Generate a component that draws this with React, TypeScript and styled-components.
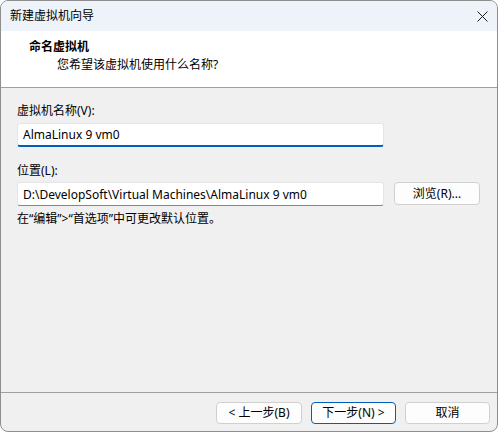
import styled, { createGlobalStyle } from 'styled-components';

const GlobalStyle = createGlobalStyle`
  html, body {
    margin: 0;
    padding: 0;
    background: #ffffff;
  }
  * {
    box-sizing: border-box;
  }
`;

const font = `"Noto Sans", "Noto Sans CJK SC", sans-serif`;

const Window = styled.div`
  width: 498px;
  height: 432px;
  display: flex;
  flex-direction: column;
  border: 1px solid #8e8e8e;
  border-radius: 8px;
  overflow: hidden;
  background: #f0f0f0;
  font-family: ${font};
  font-size: 12px;
  color: #000;
`;

const TitleBar = styled.div`
  height: 30px;
  flex: none;
  display: flex;
  align-items: center;
  justify-content: space-between;
  padding: 0 9px 0 9px;
  background: #eef2f9;
`;

const TitleText = styled.span`
  line-height: 16px;
`;

const CloseButton = styled.button`
  width: 12px;
  height: 12px;
  padding: 0;
  margin-right: 0;
  border: none;
  background: transparent;
  display: flex;
  align-items: center;
  justify-content: center;
`;

const Header = styled.div`
  height: 57px;
  flex: none;
  display: flex;
  flex-direction: column;
  gap: 2px;
  padding: 8px 0 0 28px;
  background: #ffffff;
  border-bottom: 1px solid #a0a0a0;
`;

const HeaderTitle = styled.div`
  font-weight: 700;
  line-height: 16px;
`;

const HeaderSub = styled.div`
  padding-left: 28px;
  line-height: 16px;
`;

const Body = styled.div`
  flex: 1;
  display: flex;
  flex-direction: column;
  padding: 15px 16px 0 16px;
`;

const Label = styled.label<{ $top?: number }>`
  display: block;
  line-height: 16px;
  margin-top: ${(p) => p.$top ?? 0}px;
`;

const Row = styled.div<{ $top: number }>`
  display: flex;
  gap: 10px;
  margin-top: ${(p) => p.$top}px;
`;

const TextBox = styled.input<{ $focused?: boolean }>`
  width: 367px;
  height: 24px;
  padding: 0 5px;
  font-family: ${font};
  font-size: 12px;
  color: #000;
  background: #ffffff;
  border: 1px solid #e5e5e5;
  border-bottom: ${(p) => (p.$focused ? '2px solid #005fb8' : '1px solid #868686')};
  border-radius: 3px;
  outline: none;
`;

const Button = styled.button<{ $primary?: boolean; $w: number }>`
  width: ${(p) => p.$w}px;
  height: ${(p) => (p.$primary !== undefined ? 22 : 23)}px;
  padding: 0;
  font-family: ${font};
  font-size: 12px;
  color: #000;
  background: #fdfdfd;
  border: 1px solid ${(p) => (p.$primary ? '#005fb8' : '#d0d0d0')};
  border-radius: 4px;
  line-height: 16px;
`;

const Hint = styled.div`
  margin-top: 5px;
  line-height: 16px;
`;

const Footer = styled.div`
  height: 39px;
  flex: none;
  display: flex;
  justify-content: flex-end;
  align-items: flex-start;
  gap: 9px;
  padding: 9px 7px 0 0;
  border-top: 1px solid #a0a0a0;
`;

export default function App() {
  return (
    <>
      <GlobalStyle />
      <Window>
        <TitleBar>
          <TitleText>新建虚拟机向导</TitleText>
          <CloseButton aria-label="关闭">
            <svg width="11" height="11" viewBox="0 0 11 11">
              <path d="M0.5 0.5 L10.5 10.5 M10.5 0.5 L0.5 10.5" stroke="#1a1a1a" strokeWidth="1" fill="none" />
            </svg>
          </CloseButton>
        </TitleBar>
        <Header>
          <HeaderTitle>命名虚拟机</HeaderTitle>
          <HeaderSub>您希望该虚拟机使用什么名称?</HeaderSub>
        </Header>
        <Body>
          <Label>虚拟机名称(V):</Label>
          <Row $top={4}>
            <TextBox $focused defaultValue="AlmaLinux 9 vm0" />
          </Row>
          <Label $top={16}>位置(L):</Label>
          <Row $top={3}>
            <TextBox defaultValue={'D:\\DevelopSoft\\Virtual Machines\\AlmaLinux 9 vm0'} />
            <Button $w={86}>浏览(R)...</Button>
          </Row>
          <Hint>在“编辑”&gt;“首选项”中可更改默认位置。</Hint>
        </Body>
        <Footer>
          <Button $w={86} $primary={false}>&lt; 上一步(B)</Button>
          <Button $w={85} $primary>下一步(N) &gt;</Button>
          <Button $w={85} $primary={false}>取消</Button>
        </Footer>
      </Window>
    </>
  );
}
